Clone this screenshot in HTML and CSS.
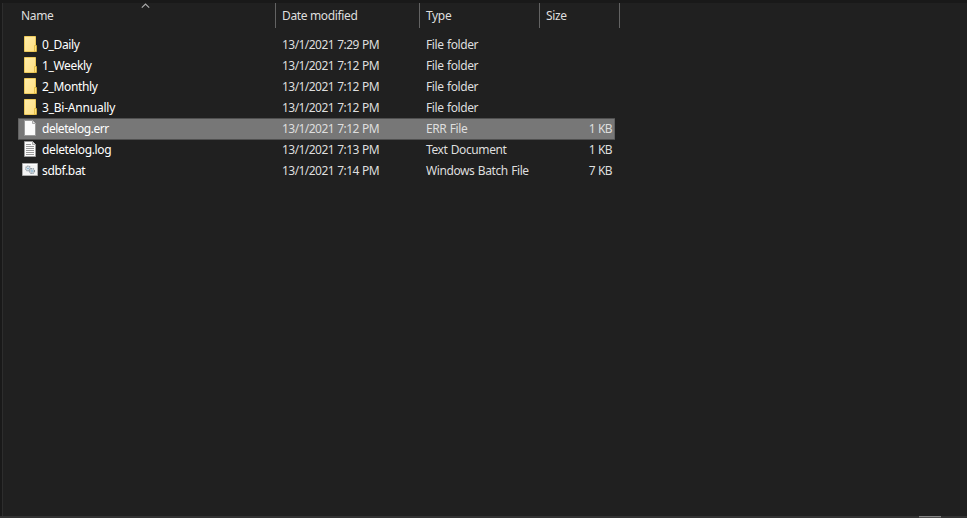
FILE: index.html
```
<!DOCTYPE html>
<html lang="en">
<head>
<meta charset="utf-8">
<title>File list</title>
<link rel="stylesheet" href="styles.css">
</head>
<body>
<svg class="defs" width="0" height="0">
  <defs>
    <linearGradient id="fold" x1="0" y1="0" x2="1" y2="1"><stop offset="0" stop-color="#ffeda9"/><stop offset="1" stop-color="#ffdf82"/></linearGradient>
    <symbol id="folder" viewBox="0 0 16 16"><path d="M2.500.500h11v15h-11z" fill="url(#fold)" stroke="#edca5c"/><path d="M12.500 15.500v-6h2v6z" fill="#ffe07c" stroke="#e0b93f" stroke-width=".8"/></symbol>
    <symbol id="blank" viewBox="0 0 16 16"><path d="M2.500.500h8l3 3v12h-11z" fill="#fbfbfb" stroke="#9b9b9b"/><path d="M10.500.500v3h3" fill="#e2e2e2" stroke="#aaa"/></symbol>
    <symbol id="text" viewBox="0 0 16 16"><path d="M2.500.500h8l3 3v12h-11z" fill="#fbfbfb" stroke="#9b9b9b"/><path d="M10.500.500v3h3" fill="#e2e2e2" stroke="#aaa"/><path d="M4 3.500h5M4 5.500h8M4 7.500h8M4 9.500h8M4 11.500h8M4 13.500h8" stroke="#999" fill="none"/></symbol>
    <symbol id="batch" viewBox="0 0 16 16"><path d="M.5 1.500h15v12H.5z" fill="#f4f4f4" stroke="#aaa"/><path d="M1 2.500h14" stroke="#fff"/><circle cx="6" cy="6.500" r="2.300" fill="#dce5eb" stroke="#98a3ab" stroke-width="1.400" stroke-dasharray="1.200 .6"/><circle cx="10" cy="9" r="2.400" fill="#dce5eb" stroke="#87939c" stroke-width="1.400" stroke-dasharray="1.200 .6"/><circle cx="6" cy="6.500" r=".7" fill="#5b9bc5"/><circle cx="10" cy="9" r=".8" fill="#5b9bc5"/></symbol>
  </defs>
</svg>
<main class="pane">
  <div class="header row">
    <div class="cell name">Name<svg class="sort" width="9" height="6" viewBox="0 0 9 6"><path d="M.8 4.700 4.500 1 8.200 4.700" fill="none" stroke="#aaa" stroke-width="1.200"/></svg></div>
    <div class="cell date">Date modified</div><div class="cell type">Type</div><div class="cell size">Size</div>
  </div>
  <div class="list">
    <div class="row"><div class="cell name"><svg class="icon"><use href="#folder"/></svg>0_Daily</div><div class="cell date">13/1/2021 7:29 PM</div><div class="cell type">File folder</div><div class="cell size"></div></div>
    <div class="row"><div class="cell name"><svg class="icon"><use href="#folder"/></svg>1_Weekly</div><div class="cell date">13/1/2021 7:12 PM</div><div class="cell type">File folder</div><div class="cell size"></div></div>
    <div class="row"><div class="cell name"><svg class="icon"><use href="#folder"/></svg>2_Monthly</div><div class="cell date">13/1/2021 7:12 PM</div><div class="cell type">File folder</div><div class="cell size"></div></div>
    <div class="row"><div class="cell name loose"><svg class="icon"><use href="#folder"/></svg>3_Bi-Annually</div><div class="cell date">13/1/2021 7:12 PM</div><div class="cell type">File folder</div><div class="cell size"></div></div>
    <div class="row selected"><div class="cell name tight"><svg class="icon"><use href="#blank"/></svg>deletelog.err</div><div class="cell date">13/1/2021 7:12 PM</div><div class="cell type">ERR File</div><div class="cell size">1 KB</div></div>
    <div class="row"><div class="cell name"><svg class="icon"><use href="#text"/></svg>deletelog.log</div><div class="cell date">13/1/2021 7:13 PM</div><div class="cell type">Text Document</div><div class="cell size">1 KB</div></div>
    <div class="row"><div class="cell name"><svg class="icon"><use href="#batch"/></svg>sdbf.bat</div><div class="cell date">13/1/2021 7:14 PM</div><div class="cell type">Windows Batch File</div><div class="cell size">7 KB</div></div>
  </div>
  <div class="footer"><span class="thumb"></span></div>
</main>
</body>
</html>
```
FILE: styles.css
```
* { box-sizing: border-box; }
body { margin: 0; background: #191919; overflow: hidden; }
.defs { position: absolute; }
.pane {
  height: 518px;
  border-top: 3px solid #191919;
  display: flex;
  flex-direction: column;
  background: linear-gradient(90deg, #191919 2px, #2d2d2d 2px 3px, #202020 3px);
  color: #dedede;
  font: 12px/22px "Noto Sans", "Open Sans", sans-serif;
  letter-spacing: -.35px;
  white-space: nowrap;
}
.row { display: grid; grid-template-columns: 258px 144px 120px 75px; margin-left: 18px; width: 597px; height: 21px; }
.header { grid-template-columns: 258px 144px 120px 80px; grid-template-rows: 25px; width: 602px; height: 25px; line-height: 26px; }
.header .cell { border-right: 1px solid #636363; }
.header .name { position: relative; padding-left: 3px; }
.sort { position: absolute; left: 123px; top: 0; }
.date, .type { padding-left: 6px; }
.header .size { padding-left: 6px; }
.list { flex: 1; padding-top: 6px; }
.list .date { letter-spacing: -.55px; word-spacing: .65px; }
.list .type { letter-spacing: -.4px; word-spacing: .6px; }
.list .name { display: flex; gap: 4px; padding-left: 4px; color: #fff; }
.list .loose { letter-spacing: -.22px; }
.list .tight { letter-spacing: -.46px; }
.icon { width: 16px; height: 16px; margin-top: 2px; }
.list .size { text-align: right; padding-right: 3px; letter-spacing: -.6px; word-spacing: .5px; }
.selected { background: #777; box-shadow: 0 1px 0 #505050, inset 0 1px 0 #505050, inset -1px 0 0 #626262, inset 1px 0 0 #626262; }
.footer { height: 2px; background: #333; display: flex; }
.thumb { width: 22px; height: 2px; margin-left: 919px; background: #4d4d4d; border-top: 1px solid #858585; }
```
